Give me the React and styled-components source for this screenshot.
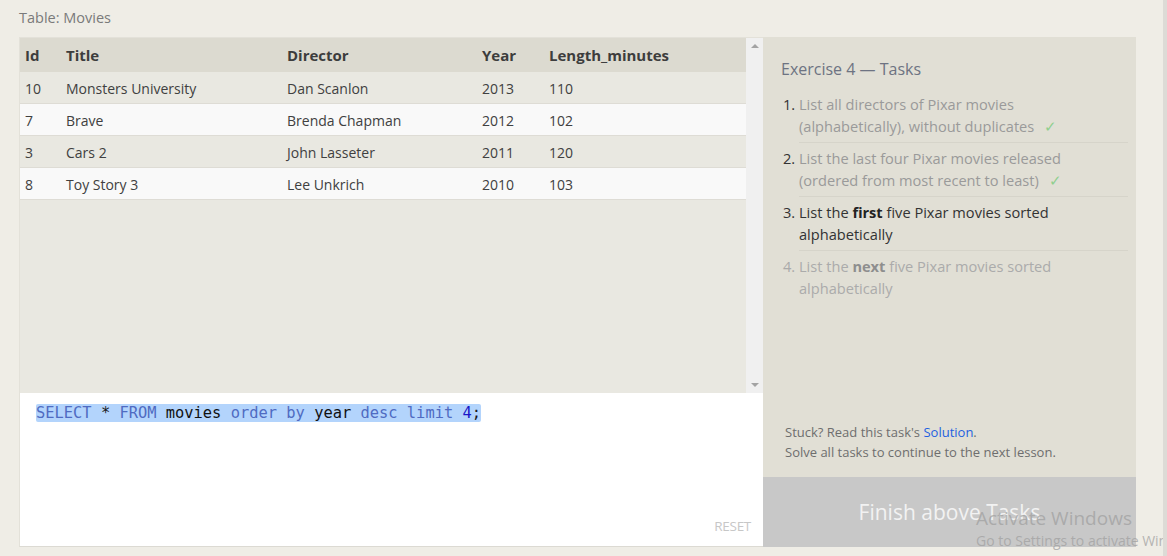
import styled, { createGlobalStyle } from "styled-components";

const GlobalStyle = createGlobalStyle`
  html, body {
    margin: 0;
    padding: 0;
    background: #efede6;
  }
  body {
    font-family: "Open Sans", "Noto Sans", sans-serif;
  }
`;

const movies = [
  { id: 10, title: "Monsters University", director: "Dan Scanlon", year: 2013, length: 110 },
  { id: 7, title: "Brave", director: "Brenda Chapman", year: 2012, length: 102 },
  { id: 3, title: "Cars 2", director: "John Lasseter", year: 2011, length: 120 },
  { id: 8, title: "Toy Story 3", director: "Lee Unkrich", year: 2010, length: 103 },
];

const tasks = [
  { state: "done", text: <>List all directors of Pixar movies (alphabetically), without duplicates</> },
  { state: "done", text: <>List the last four Pixar movies released (ordered from most recent to least)</> },
  { state: "current", text: <>List the <b>first</b> five Pixar movies sorted alphabetically</> },
  { state: "todo", text: <>List the <b>next</b> five Pixar movies sorted alphabetically</> },
];

// Styled Components
const Page = styled.div`
  width: 1167px;
  height: 556px;
  box-sizing: border-box;
  padding: 8px 0 0 19px;
  overflow: hidden;
  position: relative;
`;

const Caption = styled.div`
  font-size: 14.5px;
  line-height: 20px;
  color: #7a7a7a;
  margin-bottom: 9px;
`;

const Workspace = styled.div`
  display: flex;
  width: 1117px;
  height: 510px;
`;

const LeftColumn = styled.div`
  width: 744px;
  display: flex;
  flex-direction: column;
`;

const ResultArea = styled.div`
  height: 356px;
  display: flex;
  border-top: 1px solid #e3e1d9;
  box-sizing: border-box;
`;

const TableWrap = styled.div`
  flex: 1;
  background: #e9e8e1;
  border-left: 1px solid #e3e1d9;
`;

const Table = styled.table`
  width: 100%;
  border-collapse: collapse;
  font-size: 14px;
  color: #404040;
`;

const HeadCell = styled.th`
  text-align: left;
  font-weight: 700;
  font-size: 15px;
  height: 34px;
  padding: 0 5px;
  background: #dcdad0;
  color: #3d3d3d;
  width: ${(p) => p.$w || "auto"};
`;

const Row = styled.tr`
  background: ${(p) => (p.$odd ? "#f9f9f9" : "#e9e8e1")};
  border-bottom: 1px solid #dedcd5;
`;

const Cell = styled.td`
  line-height: 29px;
  padding: 2px 5px 0;
`;

const Scrollbar = styled.div`
  width: 17px;
  background: #f0f0f0;
  display: flex;
  flex-direction: column;
  justify-content: space-between;
  align-items: center;
  padding: 6px 0 6px;
  box-sizing: border-box;
`;

const Arrow = styled.div`
  width: 0;
  height: 0;
  border-left: 4px solid transparent;
  border-right: 4px solid transparent;
  ${(p) =>
    p.$down
      ? "border-top: 4px solid #a3a3a3;"
      : "border-bottom: 4px solid #a3a3a3;"}
`;

const Editor = styled.div`
  flex: 1;
  background: #ffffff;
  border-bottom: 1px solid #dcdad3;
  border-left: 1px solid #e3e1d9;
  position: relative;
  padding: 8px 0 0 16px;
`;

const Code = styled.span`
  font-family: "DejaVu Sans Mono", "Liberation Mono", monospace;
  font-size: 15.4px;
  line-height: 20px;
  background: #b3d4fc;
  border-radius: 2px;
  color: #1a1a1a;
  white-space: pre;
`;

const Token = styled.span`
  color: ${(p) =>
    p.$kind === "kw" ? "#4f6bc2" : p.$kind === "num" ? "#1a18c8" : "#111"};
`;

const ResetButton = styled.div`
  position: absolute;
  right: 12px;
  bottom: 11px;
  font-size: 13.5px;
  color: #c7c7c7;
  letter-spacing: -0.3px;
`;

const TaskPanel = styled.div`
  width: 373px;
  background: #e1dfd5;
  display: flex;
  flex-direction: column;
`;

const TaskBody = styled.div`
  flex: 1;
  padding: 21px 8px 0 18px;
  display: flex;
  flex-direction: column;
`;

const TaskTitle = styled.div`
  font-size: 16px;
  color: #6d7382;
  line-height: 22px;
  margin-bottom: 13px;
`;

const TaskList = styled.ol`
  margin: 0;
  padding: 0 0 0 18px;
  flex: 1;
`;

const TaskItem = styled.li`
  font-size: 14.6px;
  line-height: 22px;
  padding: 0 0 5px 0;
  margin-bottom: 4px;
  border-bottom: ${(p) => (p.$last ? "none" : "1px solid #d6d4ca")};
  color: ${(p) =>
    p.$state === "current" ? "#333" : p.$state === "done" ? "#9a9a9a" : "#ababab"};
  &::marker {
    color: ${(p) => (p.$state === "todo" ? "#aaa" : "#333")};
  }
  b {
    color: ${(p) => (p.$state === "current" ? "#222" : "#8e8e8e")};
  }
`;

const TaskText = styled.div`
  padding-right: 56px;
`;

const Check = styled.span`
  color: #8fcf8f;
  margin-left: 10px;
`;

const Help = styled.div`
  font-size: 13px;
  line-height: 20px;
  color: #6e6e6e;
  padding-bottom: 15px;
  padding-left: 4px;

  a {
    color: #1f5fe0;
    text-decoration: none;
  }
`;

const FinishButton = styled.div`
  height: 70px;
  background: #c8c8c8;
  color: #f2f2f2;
  font-size: 21px;
  display: flex;
  align-items: center;
  justify-content: center;
`;

const Watermark = styled.div`
  position: absolute;
  left: 976px;
  top: 509px;
  color: rgba(160, 160, 160, 0.75);
  font-family: "Open Sans", sans-serif;
  white-space: nowrap;
  line-height: 1;
`;

const WatermarkTitle = styled.div`
  font-size: 19px;
  margin-bottom: 6px;
`;

const WatermarkSub = styled.div`
  font-size: 14px;
`;

const EdgeStrip = styled.div`
  position: absolute;
  right: 0;
  top: 0;
  width: 4px;
  height: 100%;
  background: #dddbd6;
`;

export default function App() {
  return (
    <>
      <GlobalStyle />
      <Page>
        <Caption>Table: Movies</Caption>
        <Workspace>
          <LeftColumn>
            <ResultArea>
              <TableWrap>
                <Table>
                  <thead>
                    <tr>
                      <HeadCell $w="31px">Id</HeadCell>
                      <HeadCell $w="211px">Title</HeadCell>
                      <HeadCell $w="185px">Director</HeadCell>
                      <HeadCell $w="57px">Year</HeadCell>
                      <HeadCell>Length_minutes</HeadCell>
                    </tr>
                  </thead>
                  <tbody>
                    {movies.map((m, i) => (
                      <Row key={m.id} $odd={i % 2 === 1}>
                        <Cell>{m.id}</Cell>
                        <Cell>{m.title}</Cell>
                        <Cell>{m.director}</Cell>
                        <Cell>{m.year}</Cell>
                        <Cell>{m.length}</Cell>
                      </Row>
                    ))}
                  </tbody>
                </Table>
              </TableWrap>
              <Scrollbar>
                <Arrow />
                <Arrow $down />
              </Scrollbar>
            </ResultArea>
            <Editor>
              <Code>
                <Token $kind="kw">SELECT</Token> * <Token $kind="kw">FROM</Token>{" "}
                <Token>movies</Token> <Token $kind="kw">order</Token>{" "}
                <Token $kind="kw">by</Token> <Token>year</Token>{" "}
                <Token $kind="kw">desc</Token> <Token $kind="kw">limit</Token>{" "}
                <Token $kind="num">4</Token>;
              </Code>
              <ResetButton>RESET</ResetButton>
            </Editor>
          </LeftColumn>
          <TaskPanel>
            <TaskBody>
              <TaskTitle>Exercise 4 — Tasks</TaskTitle>
              <TaskList>
                {tasks.map((t, i) => (
                  <TaskItem key={i} $state={t.state} $last={i === tasks.length - 1}>
                    <TaskText>
                      {t.text}
                      {t.state === "done" && <Check>✓</Check>}
                    </TaskText>
                  </TaskItem>
                ))}
              </TaskList>
              <Help>
                Stuck? Read this task's <a href="#">Solution</a>.
                <br />
                Solve all tasks to continue to the next lesson.
              </Help>
            </TaskBody>
            <FinishButton>Finish above Tasks</FinishButton>
          </TaskPanel>
        </Workspace>
        <Watermark>
          <WatermarkTitle>Activate Windows</WatermarkTitle>
          <WatermarkSub>Go to Settings to activate Windows.</WatermarkSub>
        </Watermark>
        <EdgeStrip />
      </Page>
    </>
  );
}
